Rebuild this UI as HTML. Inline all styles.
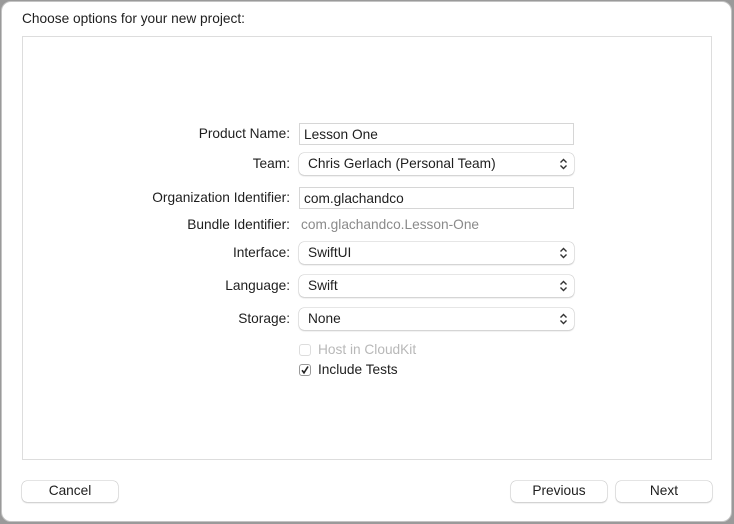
<!DOCTYPE html><html><head><style>
body{margin:0;width:734px;height:524px;background:#9a9a9a;font-family:"Liberation Sans",sans-serif;font-size:13.7px;color:#1e1e1e;position:relative;overflow:hidden}
.win{position:absolute;left:1px;top:1px;width:731px;height:521px;background:#fff;border-radius:10px;border:1px solid #c4c4c4;box-sizing:border-box}
.t{position:absolute;left:22px;top:11px}
.panel{position:absolute;left:22px;top:36px;width:690px;height:424px;border:1px solid #ddd;box-sizing:border-box}
.lab{position:absolute;right:444px;text-align:right;white-space:nowrap}
.f{position:absolute;left:299px;width:275px;height:22px;box-sizing:border-box;border:1px solid #d6d6d6;padding:3px 4px;line-height:15px}
.p{position:absolute;left:299px;width:275px;height:22px;box-sizing:border-box;border-radius:5px;box-shadow:0 0 0 .5px #ccc,0 1px 1.5px rgba(0,0,0,.2);padding:3px 9px;line-height:16px}
.p svg{position:absolute;right:6px;top:5px}
.cb{position:absolute;left:299px;width:12px;height:12px;border:1px solid #bbb;border-radius:3px;box-sizing:border-box}
.b{position:absolute;top:481px;width:96px;height:21px;border-radius:5px;box-shadow:0 0 0 .5px #c8c8c8,0 1px 1.5px rgba(0,0,0,.2);text-align:center;line-height:20px}
</style></head><body><div class="win">
</div>
<div class="t">Choose options for your new project:</div>
<div class="panel"></div>
<div class="lab" style="top:126px">Product Name:</div><div class="f" style="top:123px">Lesson One</div>
<div class="lab" style="top:156px">Team:</div><div class="p" style="top:153px">Chris Gerlach (Personal Team)<svg width="9" height="12" viewBox="0 0 9 12"><path d="M1.5 4.5L4.5 1.5L7.5 4.5M1.5 7.5L4.5 10.5L7.5 7.5" fill="none" stroke="#333" stroke-width="1.4"/></svg></div>
<div class="lab" style="top:190px">Organization Identifier:</div><div class="f" style="top:187px">com.glachandco</div>
<div class="lab" style="top:217px">Bundle Identifier:</div><div style="position:absolute;left:301px;top:217px;color:#8a8a8a">com.glachandco.Lesson-One</div>
<div class="lab" style="top:245px">Interface:</div><div class="p" style="top:242px">SwiftUI<svg width="9" height="12" viewBox="0 0 9 12"><path d="M1.5 4.5L4.5 1.5L7.5 4.5M1.5 7.5L4.5 10.5L7.5 7.5" fill="none" stroke="#333" stroke-width="1.4"/></svg></div>
<div class="lab" style="top:278px">Language:</div><div class="p" style="top:275px">Swift<svg width="9" height="12" viewBox="0 0 9 12"><path d="M1.5 4.5L4.5 1.5L7.5 4.5M1.5 7.5L4.5 10.5L7.5 7.5" fill="none" stroke="#333" stroke-width="1.4"/></svg></div>
<div class="lab" style="top:311px">Storage:</div><div class="p" style="top:308px">None<svg width="9" height="12" viewBox="0 0 9 12"><path d="M1.5 4.5L4.5 1.5L7.5 4.5M1.5 7.5L4.5 10.5L7.5 7.5" fill="none" stroke="#333" stroke-width="1.4"/></svg></div>
<div class="cb" style="top:344px;border-color:#ddd"></div><div style="position:absolute;left:318px;top:342px;color:#b8b8b8">Host in CloudKit</div>
<div class="cb" style="top:364px;border-color:#999"><svg width="10" height="10" viewBox="0 0 10 10" style="position:absolute;left:0;top:0"><path d="M2 5.2L4 7.8L8 1.5" fill="none" stroke="#222" stroke-width="1.6"/></svg></div><div style="position:absolute;left:318px;top:362px">Include Tests</div>
<div class="b" style="left:22px">Cancel</div>
<div class="b" style="left:511px">Previous</div>
<div class="b" style="left:616px">Next</div>
</body></html>
